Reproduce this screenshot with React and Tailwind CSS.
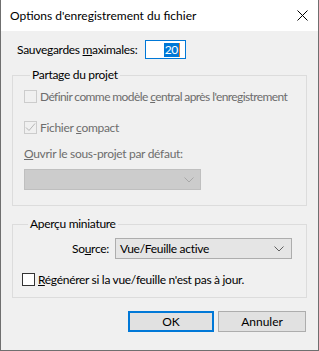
import React from "react";

const Chevron = ({ color = "#606060" }) => (
  <svg width="10" height="6" viewBox="0 0 10 6">
    <path d="M0.5 0.5 L5 5 L9.5 0.5" fill="none" stroke={color} strokeWidth="1" />
  </svg>
);

const Check = () => (
  <svg width="11" height="11" viewBox="0 0 11 11">
    <path d="M1 5.5 L4 8.5 L10 1.5" fill="none" stroke="#b5b5b5" strokeWidth="1" />
  </svg>
);

const App = () => {
  return (
    <div
      className="w-[319px] h-[351px] flex flex-col bg-[#f0f0f0] border-x border-b border-[#6f6f6f] text-[12px] text-black leading-none whitespace-nowrap tracking-[-0.3px]"
      style={{ fontFamily: '"Segoe UI", Lato, sans-serif' }}
    >
      {/* barre de titre */}
      <div className="h-[31px] bg-white flex items-center justify-between pl-[9px] pr-[10px] tracking-normal">
        <span className="text-[12px]">Options d'enregistrement du fichier</span>
        <svg width="11" height="11" viewBox="0 0 11 11">
          <path d="M0.5 0.5 L10.5 10.5 M10.5 0.5 L0.5 10.5" stroke="#000" strokeWidth="1" />
        </svg>
      </div>

      <div className="flex flex-col px-[11px]">
        {/* sauvegardes */}
        <div className="flex items-center mt-[9px] pl-[5px]">
          <span className="w-[128px]">
            Sauvegardes <span className="underline">m</span>aximales:
          </span>
          <div className="w-[41px] h-[19px] bg-white border border-[#0078d7] flex items-center justify-end pr-[5px]">
            <span className="bg-[#0078d7] text-white px-[1px] h-[14px] flex items-center">20</span>
            <span className="w-[1px] h-[14px] bg-[#e8812b]" />
          </div>
        </div>

        {/* Partage du projet */}
        <fieldset className="mt-[10px] border border-[#dcdcdc] h-[137px] px-[11px] min-w-0">
          <legend className="px-[2px] ml-[6px]">Partage du projet</legend>
          <div className="flex items-center mt-[9px] text-[#6d6d6d]">
            <span className="shrink-0 w-[13px] h-[13px] border border-[#cccccc] bg-[#f0f0f0] mr-[3px]" />
            <span className="tracking-[-0.6px]">
              Définir comme modèle <span className="underline">c</span>entral après l'enregistrement
            </span>
          </div>
          <div className="flex items-center mt-[18px] text-[#6d6d6d]">
            <span className="shrink-0 w-[13px] h-[13px] border border-[#cccccc] bg-[#f0f0f0] mr-[3px] flex items-center justify-center">
              <Check />
            </span>
            <span>
              Fichier <span className="underline">c</span>ompact
            </span>
          </div>
          <div className="mt-[14px] text-[#6d6d6d]">
            <span className="underline">O</span>uvrir le sous-projet par défaut:
          </div>
          <div className="mt-[9px] w-[177px] h-[21px] bg-[#cccccc] border border-[#bfbfbf] flex items-center justify-end pr-[6px]">
            <Chevron color="#a8a8a8" />
          </div>
        </fieldset>

        {/* Aperçu miniature */}
        <fieldset className="mt-[12px] border border-[#dcdcdc] h-[80px] px-[9px] min-w-0">
          <legend className="px-[2px] ml-[6px]">Aperçu miniature</legend>
          <div className="flex items-center mt-[8px]">
            <span className="ml-[50px] w-[43px]">
              So<span className="underline">u</span>rce:
            </span>
            <div className="w-[177px] h-[21px] bg-[#e5e5e5] border border-[#adadad] flex items-center justify-between pl-[4px] pr-[7px]">
              <span>Vue/Feuille active</span>
              <Chevron />
            </div>
          </div>
          <div className="flex items-center mt-[14px]">
            <span className="shrink-0 w-[13px] h-[13px] border border-[#333333] bg-white mr-[3px]" />
            <span>
              <span className="underline">R</span>égénérer si la vue/feuille n'est pas à jour.
            </span>
          </div>
        </fieldset>

        {/* boutons */}
        <div className="flex justify-end gap-[4px] mt-[13px] pr-[1px] tracking-normal">
          <button className="w-[86px] h-[21px] bg-[#e1e1e1] border-2 border-[#0078d7] flex items-center justify-center">
            OK
          </button>
          <button className="w-[88px] h-[21px] bg-[#e1e1e1] border border-[#adadad] flex items-center justify-center">
            Annuler
          </button>
        </div>
      </div>
    </div>
  );
};

export default App;
